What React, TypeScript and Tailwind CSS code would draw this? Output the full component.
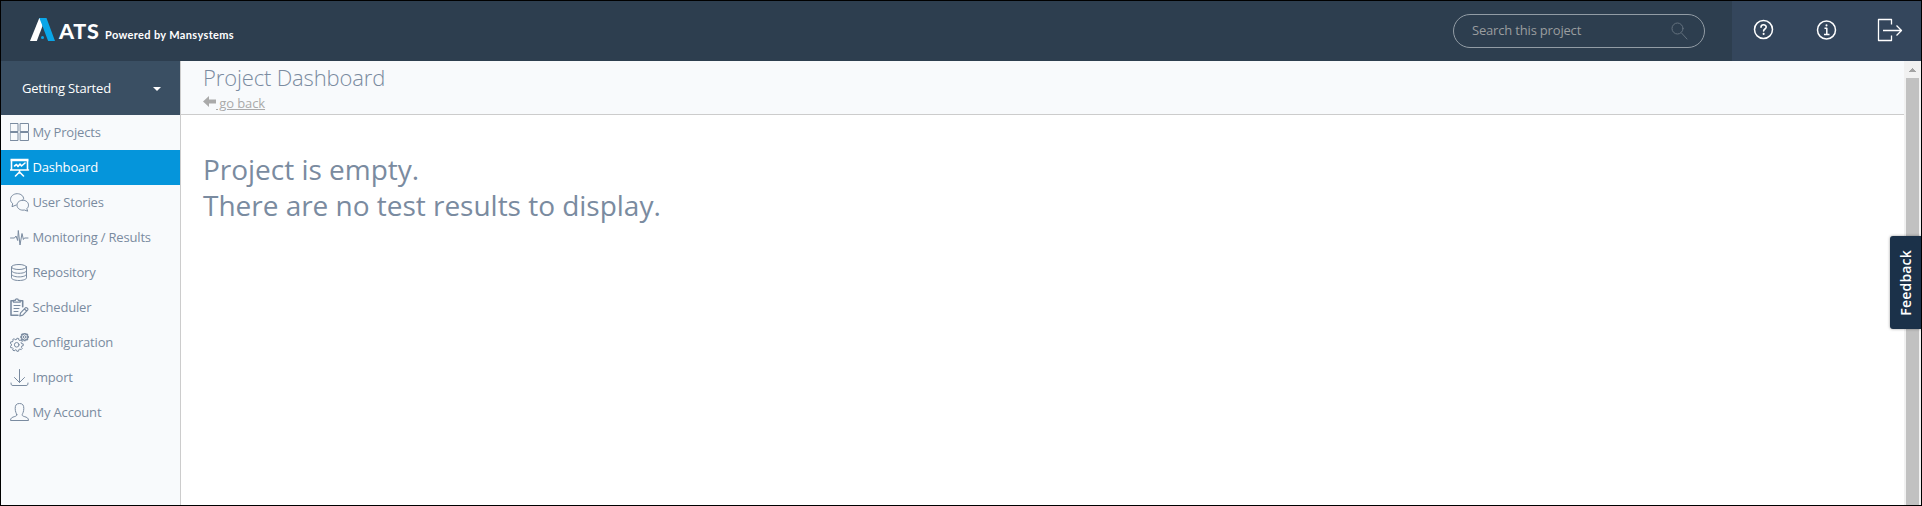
import type { ReactNode } from "react";

const stroke = {
  fill: "none",
  stroke: "currentColor",
  strokeWidth: 1,
  strokeLinecap: "round" as const,
  strokeLinejoin: "round" as const,
};

function Icon({ children }: { children: ReactNode }) {
  return (
    <svg width="20" height="20" viewBox="0 0 20 20" className="shrink-0" {...stroke}>
      {children}
    </svg>
  );
}

const gear = (cx: number, cy: number, r: number, teeth: number, depth: number) => {
  const pts: string[] = [];
  const step = (Math.PI * 2) / teeth;
  for (let i = 0; i < teeth; i++) {
    const a = i * step;
    [
      [-0.3, r - depth],
      [-0.2, r],
      [0.2, r],
      [0.3, r - depth],
    ].forEach(([o, rad]) => {
      pts.push(`${(cx + Math.cos(a + o * step) * rad).toFixed(2)},${(cy + Math.sin(a + o * step) * rad).toFixed(2)}`);
    });
  }
  return pts.join(" ");
};

const items: { label: string; active?: boolean; icon: ReactNode }[] = [
  {
    label: "My Projects",
    icon: (
      <>
        <path d="M.5 .5h7.500v8h-7.500zM10.500 .5h8v8h-8zM.5 9.500h7.500v8h-7.500zM10.500 9.500h8v8h-8z" />
      </>
    ),
  },
  {
    label: "Dashboard",
    active: true,
    icon: (
      <>
        <path d="M.5 2h18" strokeWidth="2.500" strokeLinecap="butt" />
        <path d="M1.500 3v9h16V3M.5 12h18M9.500 13v2M9.500 14l-4 4M9.500 14l4 4" strokeWidth="1.600" />
        <path d="M4.500 8l2-1.500 1.500 2L10 6l1.500 2 3.500-3" strokeWidth="1.600" />
      </>
    ),
  },
  {
    label: "User Stories",
    icon: (
      <>
        <path d="M6.200 12L2 13.700l.7-3.100C1.200 9.500.5 8 .5 6.500.5 3.200 3.500.7 7.200.7s6.500 2.200 6.500 5.300" />
        <path d="M12.800 7.200c3.200 0 5.700 2.100 5.700 5 0 1.400-.6 2.600-1.700 3.500l.9 2.500-3.300-1.200c-3.900.8-7.400-1.500-7.400-4.800 0-2.900 2.600-5 5.800-5z" />
      </>
    ),
  },
  {
    label: "Monitoring / Results",
    icon: <path d="M.5 10h4l1.500-2 1.700 4.500L8.300 2.500l1.700 14.500L12 5.500l1.400 6 1-1.500H18" />,
  },
  {
    label: "Repository",
    icon: (
      <>
        <ellipse cx="9" cy="4" rx="7.500" ry="2.500" />
        <path d="M1.500 4v10.800c0 1.500 3.300 2.700 7.500 2.700s7.500-1.200 7.500-2.700V4M1.500 7.600c0 1.500 3.300 2.700 7.500 2.700s7.500-1.200 7.500-2.700M1.500 11.200c0 1.500 3.300 2.700 7.500 2.700s7.500-1.200 7.500-2.700" />
      </>
    ),
  },
  {
    label: "Scheduler",
    icon: (
      <>
        <path d="M3.500 2.700H1v14.500h7M10 2.700h2.700v6" strokeWidth="1.600" />
        <path d="M3.500 4.200V2.400h1.800C5.300.3 8.400.3 8.400 2.400h1.800v1.800z" strokeWidth="1.200" />
        <path d="M4 7.500h6M4 10.500h5M4 13.500h4" strokeWidth="1" />
        <path d="M9.800 18l.8-3.100 5-5.200c.8-.7 3 1.300 2.200 2.200l-5 5.200zM14.500 11l2.200 2.200" strokeWidth="1.200" />
      </>
    ),
  },
  {
    label: "Configuration",
    icon: (
      <>
        <polygon points={gear(6.7, 11.8, 6.6, 9, 1.3)} />
        <circle cx="6.700" cy="11.800" r="2.300" />
        <polygon points={gear(14.6, 4, 3.8, 8, 0.8)} strokeWidth="1.200" />
        <circle cx="14.600" cy="4" r="1.300" />
      </>
    ),
  },
  {
    label: "Import",
    icon: <path d="M9.500 1.500v13M4.500 9.500l5 5 5-5M1 15c0 2 .5 2.500 2 2.500h13c1.500 0 2-.5 2-2.500" />,
  },
  {
    label: "My Account",
    icon: (
      <path d="M6.800 11.700c-.4-1.300-1.600-3-1.600-6.200C5.200 2.200 6.300.5 9.500.5s4.300 1.700 4.300 5c0 3.200-1.200 4.900-1.600 6.200-.1 1 .6 1.400 2 1.800 2.800.8 4.300 1.500 4.300 4H.5c0-2.500 1.500-3.200 4.300-4 1.400-.4 2.100-.8 2-1.800z" />
    ),
  },
];

function Header() {
  return (
    <header className="flex h-[60px] shrink-0 bg-[#2d3e4f]">
      <div className="flex grow pl-[29px] pt-[17px] text-white">
        <svg width="25" height="23" viewBox="0 0 25 23">
          <path d="M9.300 0h3.200v8L6.800 23H0z" fill="#fff" />
          <path d="M9.300 0h7.200L25 23h-6.900L11.600 5.700z" fill="#0aa6e8" />
          <circle cx="12.500" cy="19.500" r="1.500" fill="#0aa6e8" />
        </svg>
        <div className="flex items-baseline pl-[4px] font-['Lato']">
          <span className="w-[46px] text-[21.5px] leading-[27px] font-black tracking-[0.7px]">ATS</span>
          <span className="text-[11px] font-bold tracking-[0.35px] whitespace-nowrap">Powered by Mansystems</span>
        </div>
      </div>
      <div className="mt-[13px] mr-[27px] flex h-[34px] w-[252px] items-center justify-between rounded-full border border-[#929ca5] pr-[16px] pl-[18px]">
        <span className="text-[13px] tracking-[-0.18px] text-[#9a9d9f]">Search this project</span>
        <svg width="17" height="18" viewBox="0 0 17 18" className="text-[#63717e]" {...stroke}>
          <circle cx="6.500" cy="6.500" r="5.500" />
          <path d="M10.500 11l5.500 6" />
        </svg>
      </div>
      <div className="flex w-[189px] bg-[#34465c] pt-[17px] pl-[21px] text-white">
        <svg width="22" height="22" viewBox="0 0 22 22" {...stroke} strokeWidth="1.500">
          <circle cx="10.500" cy="11.500" r="9" />
          <path d="M8 9.200c0-3.200 5.200-3.200 5.200-.2 0 2-2.600 2-2.600 4" strokeWidth="1.600" />
          <path d="M10.600 15.800v.3" strokeWidth="2" />
        </svg>
        <svg width="22" height="22" viewBox="0 0 22 22" className="ml-[41px]" {...stroke} strokeWidth="1.500">
          <circle cx="10.500" cy="12" r="9" />
          <path d="M8.500 10.200h2.300v6M8 16.500h5.500" strokeLinecap="butt" />
          <path d="M10.500 7.200v.2" strokeWidth="2" />
        </svg>
        <svg width="26" height="24" viewBox="0 0 26 24" className="ml-[39px]" {...stroke} strokeWidth="1.300" strokeLinecap="butt">
          <path d="M14.500 6.500V1.500H1.500v21h13v-5" />
          <path d="M6 12.500h18M19.500 7.500l5 5-5 5" />
        </svg>
      </div>
    </header>
  );
}

function Sidebar() {
  return (
    <aside className="flex w-[180px] shrink-0 flex-col border-r border-[#ccc] bg-[#f8fafc]">
      <div className="flex h-[54px] items-center justify-between bg-[#3a4f63] pr-[19px] pl-[21px] text-[13px] text-white">
        <span className="pt-[2px] tracking-[-0.2px]">Getting Started</span>
        <svg width="8" height="4" viewBox="0 0 8 4" fill="currentColor" className="mt-[2px]">
          <path d="M0 0h8L4 4z" />
        </svg>
      </div>
      <nav>
        {items.map((item) => (
          <a
            key={item.label}
            className={`flex h-[35px] items-center pl-[9px] text-[13px] tracking-[-0.18px] ${item.active ? "bg-[#0595db] text-white" : "text-[#7a8ba0]"}`}
          >
            <Icon>{item.icon}</Icon>
            <span className="pl-[2.500px]">{item.label}</span>
          </a>
        ))}
      </nav>
    </aside>
  );
}

function Scrollbar() {
  return (
    <div className="w-[17px] shrink-0 bg-[#f1f1f1] pl-[2px]">
      <svg width="13" height="17" viewBox="0 0 13 17" className="block" shapeRendering="crispEdges">
        <path d="M3 11h7L6.500 7z" fill="#a3a3a3" />
      </svg>
      <div className="h-full w-[13px] bg-[#c1c1c1]" />
    </div>
  );
}

export default function App() {
  return (
    <div className="relative flex h-[506px] w-[1922px] flex-col overflow-hidden border border-black bg-white font-['Open_Sans',sans-serif]">
      <Header />
      <div className="flex min-h-0 grow">
        <Sidebar />
        <main className="grow">
          <div className="h-[54px] border-b border-[#ccc] bg-[#f8fafc] pl-[22px]">
            <h1 className="pt-[1px] text-[22px] leading-[30px] font-light tracking-[-0.15px] text-[#7a8ba0]">Project Dashboard</h1>
            <a className="mt-[2px] flex h-[18px] items-center text-[13px] leading-[18px] tracking-[-0.1px] text-[#aaa]">
              <svg width="13" height="11" viewBox="0 0 13 11" fill="currentColor" className="-mt-[3px]">
                <path d="M0 5.500L6 0v3.500h7v4H6V11z" />
              </svg>
              <span className="whitespace-pre underline"> go back</span>
            </a>
          </div>
          <div className="pt-[36px] pl-[22px] text-[28px] leading-[36px] tracking-[-0.02px] text-[#7a8ba0]">
            <p>Project is empty.</p>
            <p>There are no test results to display.</p>
          </div>
        </main>
        <Scrollbar />
      </div>
      <div className="absolute top-[235px] right-0 flex h-[93px] w-[31px] items-center justify-center rounded-l-[3px] bg-[#1b3149] shadow-[0_0_3px_rgba(0,0,0,0.4)]">
        <span className="rotate-180 text-[14px] font-semibold tracking-[0.2px] text-white [writing-mode:vertical-rl]">Feedback</span>
      </div>
    </div>
  );
}
